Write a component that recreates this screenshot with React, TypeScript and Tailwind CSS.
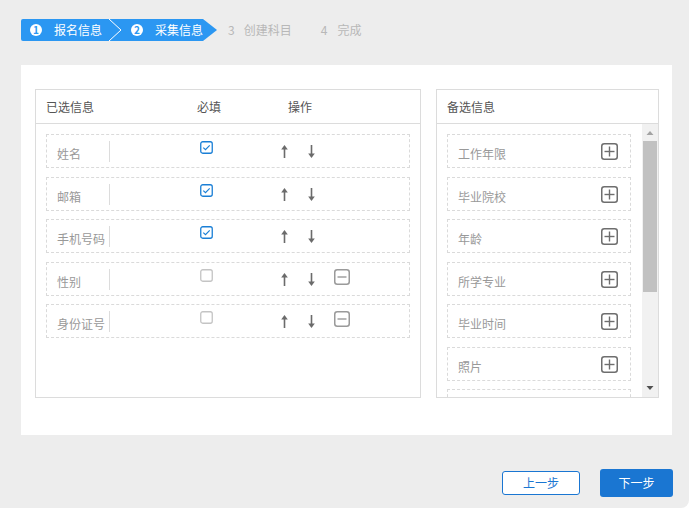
import React from "react";

const font = { fontFamily: '"Noto Sans CJK SC", "Noto Sans", sans-serif' };

function CheckBox({ checked }: { checked: boolean }) {
  return (
    <svg width="13" height="13" viewBox="0 0 13 13" className="block">
      <rect x="0.75" y="0.75" width="11.5" height="11.5" rx="2" fill="white" stroke={checked ? "#1a7fd6" : "#c4c4c4"} strokeWidth="1.3" />
      {checked && <path d="M3.3 6.6 L5.5 8.6 L9.7 4.4" fill="none" stroke="#1a7fd6" strokeWidth="1.2" />}
    </svg>
  );
}

function ArrowUp() {
  return (
    <svg width="7" height="13" viewBox="0 0 7 13" className="block">
      <polygon points="3.5,0 6.8,4.6 0.2,4.6" fill="#6b6b6b" />
      <rect x="2.7" y="3.5" width="1.6" height="9.5" fill="#6b6b6b" />
    </svg>
  );
}

function ArrowDown() {
  return (
    <svg width="7" height="13" viewBox="0 0 7 13" className="block">
      <rect x="2.7" y="0" width="1.6" height="9.5" fill="#6b6b6b" />
      <polygon points="3.5,13 6.8,8.4 0.2,8.4" fill="#6b6b6b" />
    </svg>
  );
}

function MinusBox() {
  return (
    <svg width="16" height="16" viewBox="0 0 16 16" className="block">
      <rect x="0.75" y="0.75" width="14.5" height="14.5" rx="2.5" fill="white" stroke="#9a9a9a" strokeWidth="1.5" />
      <rect x="3.5" y="7.3" width="9" height="1.4" fill="#9a9a9a" />
    </svg>
  );
}

function PlusBox() {
  return (
    <svg width="17" height="17" viewBox="0 0 17 17" className="block">
      <rect x="0.75" y="0.75" width="15.5" height="15.5" rx="2.5" fill="white" stroke="#6e6e6e" strokeWidth="1.5" />
      <rect x="3.5" y="7.8" width="10" height="1.4" fill="#6e6e6e" />
      <rect x="7.8" y="3.5" width="1.4" height="10" fill="#6e6e6e" />
    </svg>
  );
}

const selected = [
  { name: "姓名", checked: true, removable: false },
  { name: "邮箱", checked: true, removable: false },
  { name: "手机号码", checked: true, removable: false },
  { name: "性别", checked: false, removable: true },
  { name: "身份证号", checked: false, removable: true },
];

const candidates = ["工作年限", "毕业院校", "年龄", "所学专业", "毕业时间", "照片", ""];

export default function App() {
  return (
    <div className="w-[689px] h-[508px] bg-white overflow-hidden" style={font}>
      <div className="h-full bg-[#ededed] rounded-br-[8px] pt-[19px] pl-[21px] flex flex-col">
        {/* steps */}
        <div className="relative h-[22px] flex items-center text-[12px] leading-[16px]">
          <svg width="197" height="22" viewBox="0 0 197 22" className="absolute left-0 top-0">
            <path d="M2 0 H182 L196 11 L182 22 H2 Q0 22 0 20 V2 Q0 0 2 0 Z" fill="#2b97f2" />
            <polyline points="88,0 100,11 88,22" fill="none" stroke="white" strokeWidth="1" />
          </svg>
          <span className="relative ml-[9px] w-[12px] h-[12px] rounded-full bg-white text-[#2b97f2] text-[10px] leading-[12px] font-bold flex items-center justify-center">1</span>
          <span className="relative ml-[12px] text-white">报名信息</span>
          <span className="relative ml-[29px] w-[12px] h-[12px] rounded-full bg-white text-[#2b97f2] text-[10px] leading-[12px] font-bold flex items-center justify-center">2</span>
          <span className="relative ml-[12px] text-white">采集信息</span>
          <span className="ml-[25px] text-[#b8b8b8]">3</span>
          <span className="ml-[9px] text-[#b8b8b8]">创建科目</span>
          <span className="ml-[29px] text-[#b8b8b8]">4</span>
          <span className="ml-[10px] text-[#b8b8b8]">完成</span>
        </div>

        {/* white panel */}
        <div className="mt-[24px] w-[651px] h-[370px] bg-white pt-[24px] pl-[14px] flex gap-[15px]">
          {/* left table */}
          <div className="w-[386px] h-[309px] border border-[#dcdcdc] flex flex-col">
            <div className="h-[34px] border-b border-[#dcdcdc] flex items-center pl-[10px] text-[12px] text-[#555]">
              <span className="w-[151px]">已选信息</span>
              <span className="w-[91px]">必填</span>
              <span>操作</span>
            </div>
            <div className="pt-[10px] px-[10px] flex flex-col gap-[8.5px]">
              {selected.map((r) => (
                <div key={r.name} className="h-[34px] border border-dashed border-[#dadada] flex items-start">
                  <span className="ml-[10px] w-[52px] mt-[11px] text-[12px] leading-[16px] text-[#999] whitespace-nowrap">{r.name}</span>
                  <span className="w-px h-[21px] mt-[6px] bg-[#dcdcdc]" />
                  <span className="ml-[90px] mt-[6px]"><CheckBox checked={r.checked} /></span>
                  <span className="ml-[68px] mt-[10px]"><ArrowUp /></span>
                  <span className="ml-[20px] mt-[10px]"><ArrowDown /></span>
                  {r.removable && <span className="ml-[19px] mt-[6px]"><MinusBox /></span>}
                </div>
              ))}
            </div>
          </div>

          {/* right table */}
          <div className="w-[223px] h-[309px] border border-[#dcdcdc] flex flex-col">
            <div className="h-[34px] border-b border-[#dcdcdc] flex items-center pl-[10px] text-[12px] text-[#555]">
              备选信息
            </div>
            <div className="flex-1 flex overflow-hidden">
              <div className="flex-1 pt-[10px] pl-[10px] pr-[11px] flex flex-col gap-[8.5px] overflow-hidden">
                {candidates.map((c, i) => (
                  <div key={i} className="shrink-0 h-[34px] border border-dashed border-[#dadada] flex items-start justify-between">
                    <span className="ml-[10px] mt-[11px] text-[12px] leading-[16px] text-[#999]">{c}</span>
                    <span className="mr-[12px] mt-[8px]"><PlusBox /></span>
                  </div>
                ))}
              </div>
              {/* scrollbar */}
              <div className="w-[16px] bg-[#f1f1f1] flex flex-col items-center">
                <svg width="8" height="17" viewBox="0 0 8 17" className="block">
                  <polygon points="4,7 7.5,11 0.5,11" fill="#a3a3a3" />
                </svg>
                <div className="w-[14px] h-[151px] bg-[#c1c1c1]" />
                <div className="flex-1" />
                <svg width="8" height="17" viewBox="0 0 8 17" className="block">
                  <polygon points="4,10 7.5,6 0.5,6" fill="#505050" />
                </svg>
              </div>
            </div>
          </div>
        </div>

        {/* buttons */}
        <div className="mt-[34px] h-[28px] flex items-center justify-end pr-[16px] gap-[20px] text-[12px]">
          <button className="w-[78px] h-[24px] border border-[#1a76d2] rounded-[3px] bg-white text-[#1a76d2]">上一步</button>
          <button className="w-[73px] h-[28px] rounded-[3px] bg-[#1a76d2] text-white">下一步</button>
        </div>
      </div>
    </div>
  );
}
